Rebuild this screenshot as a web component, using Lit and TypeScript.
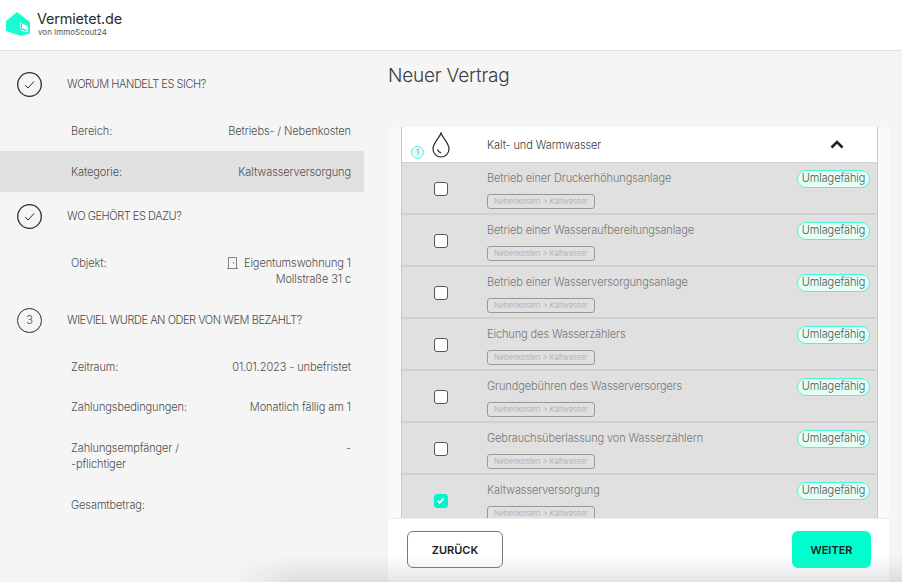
import { LitElement, html, css, svg } from "lit";
import { customElement } from "lit/decorators.js";

const ITEMS = [
  "Betrieb einer Druckerhöhungsanlage",
  "Betrieb einer Wasseraufbereitungsanlage",
  "Betrieb einer Wasserversorgungsanlage",
  "Eichung des Wasserzählers",
  "Grundgebühren des Wasserversorgers",
  "Gebrauchsüberlassung von Wasserzählern",
  "Kaltwasserversorgung",
];

const check = svg`<svg class="circle" viewBox="0 0 25 25" width="25" height="25"><circle cx="12.500" cy="12.500" r="11.800" fill="none" stroke="#2b2b2b" stroke-width="1.300"/><path d="M8 13l3 3 6-6.500" fill="none" stroke="#2b2b2b" stroke-width="1"/></svg>`;

@customElement("app-root")
export class AppRoot extends LitElement {
  static styles = css`
    :host { display: block; width: 902px; height: 582px; overflow: hidden; position: relative; background: #f5f5f5;
      font-family: Inter, "Noto Sans", sans-serif; color: #4f4f4f; font-size: 11px; font-weight: 300; letter-spacing: -0.1px; }
    * { box-sizing: border-box; }
    .top { height: 51px; background: #fff; border-bottom: 1px solid #e2e2e2; display: flex; align-items: flex-start; padding: 11px 0 0 6px; gap: 6px; }
    .brand { display: flex; flex-direction: column; }
    .brand b { font-weight: 400; font-size: 14.500px; line-height: 16px; color: #2e2e2e; letter-spacing: -0.2px; }
    .brand small { font-size: 8px; line-height: 11px; margin: 0 0 0 1px; color: #555; font-weight: 400; letter-spacing: 0; }
    .main { display: grid; grid-template-columns: 364px 1fr; height: 531px; }
    .side { display: flex; flex-direction: column; }
    .step { display: flex; align-items: center; padding-left: 17px; gap: 25px; }
    .s1 { height: 60px; padding-top: 6px; }
    .s2 { height: 48px; }
    .s3 { height: 45px; padding-bottom: 9px; }
    .step span { font-size: 11px; color: #4a4a4a; letter-spacing: -0.45px; }
    .num { width: 25px; height: 25px; border-radius: 50%; border: 1.300px solid #2b2b2b; display: flex; align-items: center; justify-content: center; font-size: 11px; }
    .circle { flex: none; }
    .kv { display: flex; justify-content: space-between; align-items: center; height: 40px; padding: 0 13px 0 71px; line-height: 16px; }
    .kv.on { background: #e1e1e1; height: 41px; }
    .kv.tall { height: 62px; align-items: flex-start; padding-top: 15px; }
    .kv.two { height: 58px; align-items: flex-start; padding-top: 13px; }
    .val { text-align: right; }
    .obj svg { vertical-align: -2px; margin-right: 6px; }
    .content { padding-left: 24px; display: flex; flex-direction: column; }
    h1 { margin: 0; height: 76px; padding-top: 12px; font-weight: 300; font-size: 19px; line-height: 26px; color: #3c3c3c; letter-spacing: -0.2px; }
    .card { width: 501px; height: 455px; background: #fafafa; border-radius: 3px 3px 0 0; display: flex; flex-direction: column; overflow: hidden; }
    .list { height: 391px; overflow: hidden; margin: 0 11px 0 13px; border-left: 1px solid #c9c9c9; border-right: 1px solid #c9c9c9; }
    .head { height: 36px; background: #fff; display: grid; grid-template-columns: 85px 1fr 80px; align-items: center; position: relative; border-bottom: 1px solid #d0d0d0; }
    .dropcell { display: flex; justify-content: center; padding-right: 7px; }
    .badge { position: absolute; left: 9px; top: 19px; width: 13px; height: 13px; border-radius: 50%; background: #e4fff6; border: 1.500px solid #4ef5d0; font-size: 7px; display: flex; align-items: center; justify-content: center; }
    .head .t { color: #3a3a3a; font-size: 11px; }
    .chev { display: flex; justify-content: center; }
    .row { height: 52px; background: #e0e0e0; border-bottom: 2px solid #d0d0d0; display: grid; grid-template-columns: 85px 1fr auto; padding-right: 7px; }
    .cb { display: flex; justify-content: center; padding: 19px 7px 0 0; }
    .box { width: 14px; height: 14px; border-radius: 3px; background: #fff; border: 1.300px solid #555; display: block; }
    .box.sel { background: #00f5cc; border-color: #00f5cc; }
    .box svg { display: block; }
    .info { padding-top: 7px; display: flex; flex-direction: column; align-items: flex-start; gap: 8px; }
    .name { font-size: 11px; line-height: 16px; color: #777; }
    .tag { height: 15px; width: 108px; border: 1px solid #999; border-radius: 3px; font-size: 7.500px; line-height: 13px; padding-left: 6px; color: #a2a8ad; white-space: nowrap; letter-spacing: 0; }
    .pill { margin-top: 7px; width: 73px; height: 18px; border-radius: 9px; background: #e6fff5; border: 1.500px solid #4ef5d0; font-size: 11px; line-height: 15px; text-align: center; color: #555; }
    .foot { height: 64px; background: #fff; border-top: 1px solid #ececec; display: flex; justify-content: space-between; align-items: flex-start; padding: 12px 18px 0 19px; position: relative; z-index: 1; }
    .btn { height: 37px; border-radius: 6px; font-family: inherit; font-weight: 600; font-size: 11px; color: #1c1c1c; display: flex; align-items: center; justify-content: center; padding: 0; }
    .back { width: 96px; background: #fff; border: 1.300px solid #777; }
    .next { width: 79px; background: #00ffcf; border: 0; }
    .fade { position: absolute; left: 230px; right: 0; bottom: 0; height: 26px; pointer-events: none; z-index: 2;
      background: linear-gradient(to bottom, rgba(160,160,160,0), rgba(160,160,160,.28)); -webkit-mask-image: linear-gradient(to right, transparent, #000 70px); mask-image: linear-gradient(to right, transparent, #000 70px); }
  `;

  private box(sel: boolean) {
    return html`<span class="box ${sel ? "sel" : ""}">${sel
      ? svg`<svg viewBox="0 0 14 14" width="12" height="12"><path d="M3 6.500l2.500 2.500 4.500-5" fill="none" stroke="#fff" stroke-width="2"/></svg>`
      : ""}</span>`;
  }

  render() {
    return html`
      <header class="top">
        <svg width="25" height="26" viewBox="0 0 25 26" style="margin-top:1px">
          <path fill="#19fbd0" d="M0 9L11 0 24 10V21.500L15 24 0 19z"/>
          <path fill="#fff" d="M13.500 10L22 14.500V20L15 19z"/>
          <path fill="none" stroke="#19fbd0" stroke-width="1.400" d="M15.500 11V17L20.500 18.500"/>
        </svg>
        <div class="brand"><b>Vermietet.de</b><small>von ImmoScout24</small></div>
      </header>
      <div class="main">
        <aside class="side">
          <div class="step s1">${check}<span>WORUM HANDELT ES SICH?</span></div>
          <div class="kv"><span>Bereich:</span><span class="val">Betriebs- / Nebenkosten</span></div>
          <div class="kv on"><span>Kategorie:</span><span class="val">Kaltwasserversorgung</span></div>
          <div class="step s2">${check}<span>WO GEHÖRT ES DAZU?</span></div>
          <div class="kv tall"><span>Objekt:</span><span class="val"><span class="obj"><svg width="11" height="12" viewBox="0 0 11 12"><path d="M0 11.500h11M1.500 11.500V.5h8v11" fill="none" stroke="#666" stroke-width=".8"/><circle cx="6.500" cy="6" r=".7" fill="#666"/></svg>Eigentumswohnung 1</span><br />Mollstraße 31 c</span></div>
          <div class="step s3"><div class="num">3</div><span>WIEVIEL WURDE AN ODER VON WEM BEZAHLT?</span></div>
          <div class="kv"><span>Zeitraum:</span><span class="val">01.01.2023 - unbefristet</span></div>
          <div class="kv"><span>Zahlungsbedingungen:</span><span class="val">Monatlich fällig am 1</span></div>
          <div class="kv two"><span>Zahlungsempfänger /<br />-pflichtiger</span><span class="val">-</span></div>
          <div class="kv"><span>Gesamtbetrag:</span></div>
        </aside>
        <section class="content">
          <h1>Neuer Vertrag</h1>
          <div class="card">
            <div class="list">
              <div class="head">
                <div class="badge">1</div>
                <div class="dropcell"><svg width="18" height="26" viewBox="0 0 18 26"><path d="M9 1C7.500 6 1 11 1 17a8 8 0 0 0 16 0C17 11 10.500 6 9 1z" fill="none" stroke="#2a2a2a" stroke-width="1.200"/><path d="M5.500 17.500c.5 1.800 2 3 3.500 3.300" fill="none" stroke="#2a2a2a" stroke-width="1.200"/></svg></div>
                <div class="t">Kalt- und Warmwasser</div>
                <div class="chev"><svg width="14" height="9" viewBox="0 0 14 9"><path d="M1.500 7.500L7 2l5.500 5.500" fill="none" stroke="#222" stroke-width="2.600"/></svg></div>
              </div>
              ${ITEMS.map((n, i) => html`
                <div class="row">
                  <div class="cb">${this.box(i === 6)}</div>
                  <div class="info"><div class="name">${n}</div><div class="tag">Nebenkosten &gt; Kaltwasser</div></div>
                  <div class="pill">Umlagefähig</div>
                </div>`)}
            </div>
            <div class="foot">
              <button class="btn back">ZURÜCK</button>
              <button class="btn next">WEITER</button>
            </div>
          </div>
        </section>
      </div>
      <div class="fade"></div>
    `;
  }
}
